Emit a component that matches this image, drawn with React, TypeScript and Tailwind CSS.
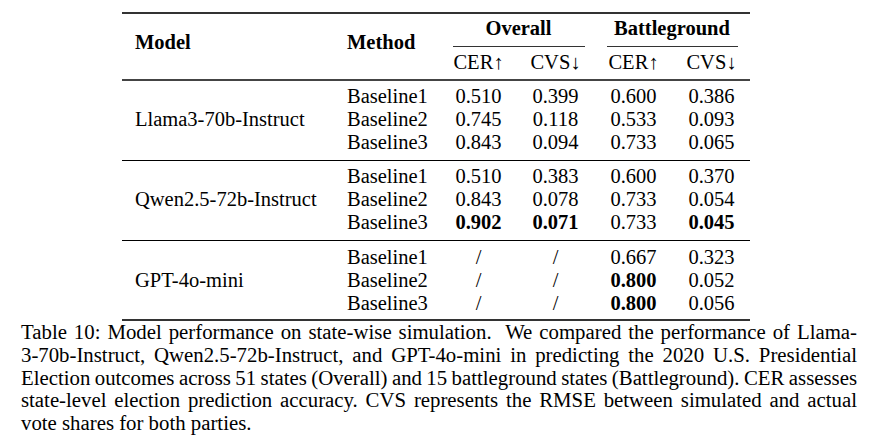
type Cell = { v: string; b?: boolean };
type Group = { model: string; rows: { method: string; cells: Cell[] }[] };

const groups: Group[] = [
  {
    model: "Llama3-70b-Instruct",
    rows: [
      { method: "Baseline1", cells: [{ v: "0.510" }, { v: "0.399" }, { v: "0.600" }, { v: "0.386" }] },
      { method: "Baseline2", cells: [{ v: "0.745" }, { v: "0.118" }, { v: "0.533" }, { v: "0.093" }] },
      { method: "Baseline3", cells: [{ v: "0.843" }, { v: "0.094" }, { v: "0.733" }, { v: "0.065" }] },
    ],
  },
  {
    model: "Qwen2.5-72b-Instruct",
    rows: [
      { method: "Baseline1", cells: [{ v: "0.510" }, { v: "0.383" }, { v: "0.600" }, { v: "0.370" }] },
      { method: "Baseline2", cells: [{ v: "0.843" }, { v: "0.078" }, { v: "0.733" }, { v: "0.054" }] },
      { method: "Baseline3", cells: [{ v: "0.902", b: true }, { v: "0.071", b: true }, { v: "0.733" }, { v: "0.045", b: true }] },
    ],
  },
  {
    model: "GPT-4o-mini",
    rows: [
      { method: "Baseline1", cells: [{ v: "/" }, { v: "/" }, { v: "0.667" }, { v: "0.323" }] },
      { method: "Baseline2", cells: [{ v: "/" }, { v: "/" }, { v: "0.800", b: true }, { v: "0.052" }] },
      { method: "Baseline3", cells: [{ v: "/" }, { v: "/" }, { v: "0.800", b: true }, { v: "0.056" }] },
    ],
  },
];

const captionLines = [
  "Table 10: Model performance on state-wise simulation.  We compared the performance of Llama-",
  "3-70b-Instruct, Qwen2.5-72b-Instruct, and GPT-4o-mini in predicting the 2020 U.S. Presidential",
  "Election outcomes across 51 states (Overall) and 15 battleground states (Battleground). CER assesses",
  "state-level election prediction accuracy. CVS represents the RMSE between simulated and actual",
];

function GroupBlock({ group, pt, pb }: { group: Group; pt: string; pb: string }) {
  return (
    <div className={`grid grid-cols-[212px_106px_77px_77px_79px_77px] grid-rows-[23px_23px_23px] ${pt} ${pb}`}>
      <div className="row-span-3 self-center pl-[13px]">{group.model}</div>
      {group.rows.map((row) => (
        <div key={row.method} className="contents">
          <div className="pl-[13px]">{row.method}</div>
          {row.cells.map((c, i) => (
            <div key={i} className={`text-center ${c.b ? "font-bold" : ""}`}>
              {c.v}
            </div>
          ))}
        </div>
      ))}
    </div>
  );
}

export default function App() {
  return (
    <div className="w-[874px] h-[445px] bg-white text-black text-[20.5px] leading-[23px] font-['Liberation_Serif','Times_New_Roman',serif] overflow-hidden">
      <div className="pt-[12px] pl-[122px]">
        <div className="w-[628px]">
          <div className="h-[2px] bg-[#333]" />
          {/* header */}
          <div className="flex h-[65px]">
            <div className="w-[212px] pl-[13px] pt-[17px] font-bold">Model</div>
            <div className="w-[106px] pl-[13px] pt-[17px] font-bold">Method</div>
            <div className="w-[154px] flex flex-col pt-[3px]">
              <div className="h-[23px] text-center font-bold pl-[3px]">Overall</div>
              <div className="mt-[6px] h-px bg-[#333] ml-[13px] mr-[9px]" />
              <div className="mt-[4px] grid grid-cols-2 text-center">
                <span>CER↑</span>
                <span>CVS↓</span>
              </div>
            </div>
            <div className="w-[156px] flex flex-col pt-[3px]">
              <div className="h-[23px] text-center font-bold">Battleground</div>
              <div className="mt-[6px] h-px bg-[#333] ml-[13px] mr-[12px]" />
              <div className="mt-[4px] grid grid-cols-[79px_77px] text-center">
                <span>CER↑</span>
                <span>CVS↓</span>
              </div>
            </div>
          </div>
          <div className="h-[2px] bg-[#444]" />
          <GroupBlock group={groups[0]} pt="pt-[4px]" pb="pb-[6px]" />
          <div className="h-px bg-black" />
          <GroupBlock group={groups[1]} pt="pt-[4px]" pb="pb-[6px]" />
          <div className="h-px bg-black" />
          <GroupBlock group={groups[2]} pt="pt-[5px]" pb="pb-[4px]" />
          <div className="h-[2px] bg-[#333]" />
        </div>
      </div>
      {/* caption */}
      <div className="pl-[21px] w-[857px] text-[20.8px] leading-[22.75px]">
        {captionLines.map((line) => (
          <div key={line} className="text-justify [text-align-last:justify] whitespace-pre [word-spacing:-2px]">
            {line}
          </div>
        ))}
        <div>vote shares for both parties.</div>
      </div>
    </div>
  );
}
